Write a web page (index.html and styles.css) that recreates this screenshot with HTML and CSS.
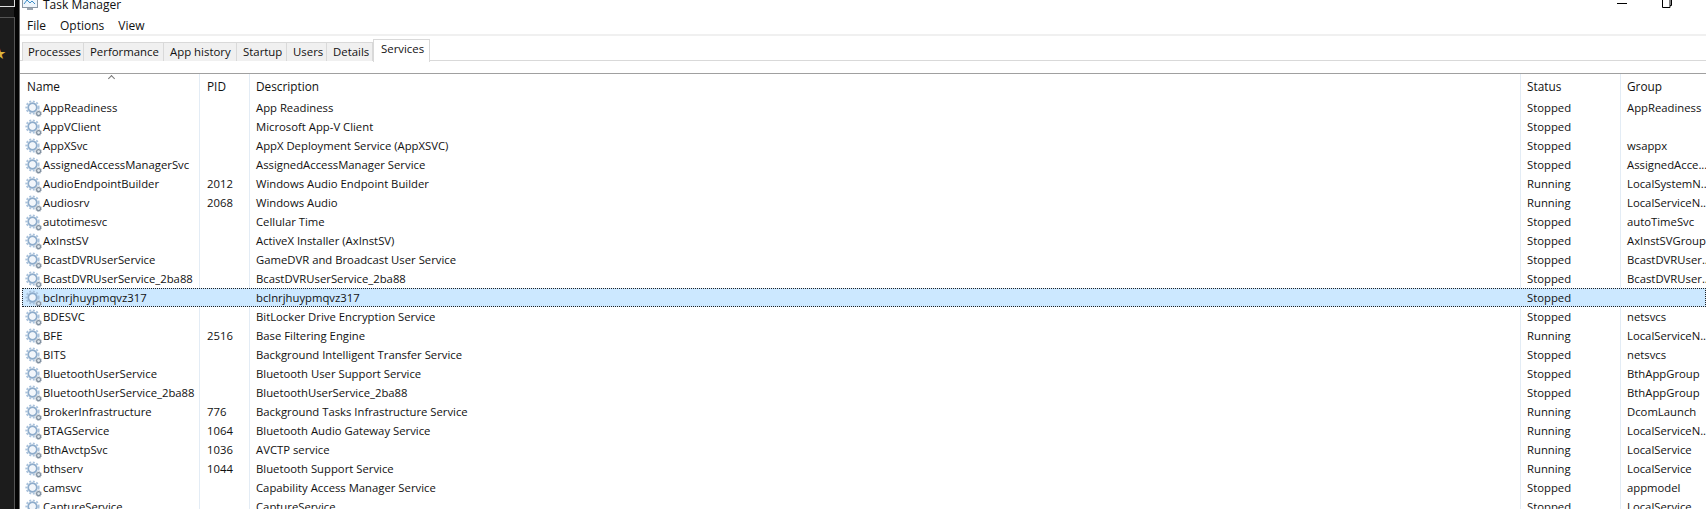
FILE: index.html
```html
<!DOCTYPE html>
<html lang="en">
<head>
<meta charset="utf-8">
<title>Task Manager</title>
<link rel="stylesheet" href="styles.css">
</head>
<body>
<svg width="0" height="0" class="defs"><defs>
<symbol id="gear" viewBox="0 0 17 17">
<circle cx="7.5" cy="7.5" r="6.2" fill="none" stroke="#a9c2dc" stroke-width="1.8" stroke-dasharray="2 1.6"/>
<circle cx="7.5" cy="7.5" r="4.2" fill="none" stroke="#8eaccb" stroke-width="2"/>
<circle cx="7.5" cy="7.5" r="3" fill="#f2f6fb"/>
<circle cx="13.6" cy="13.6" r="3.2" fill="#fff"/>
<circle cx="13.6" cy="13.6" r="2" fill="#dfe6ec" stroke="#7f8f9f" stroke-width="1.2"/>
<circle cx="13.6" cy="13.6" r="3" fill="none" stroke="#98a6b4" stroke-width="0.9" stroke-dasharray="1.2 1.1"/>
</symbol>
</defs></svg>
<div class="desktop">
<aside class="strip">
<div class="strip-top"></div>
<div class="strip-box"><span class="star">★</span></div>
</aside>
<main class="window">
<header class="titlebar">
<svg class="appicon" width="16" height="16" viewBox="0 0 16 16"><rect x="0.5" y="0.5" width="15" height="11" fill="#eef5fb" stroke="#8b97a3"/><path d="M2 8l3-4 3 3 2-2 3 3" fill="none" stroke="#3d8fc9" stroke-width="1"/><rect x="5" y="12" width="6" height="2" fill="#9aa5b0"/></svg>
<span class="title">Task Manager</span>
<svg class="minbtn" width="10" height="4" viewBox="0 0 10 4"><path d="M0 3.500h10" stroke="#000" fill="none"/></svg>
<svg class="maxbtn" width="10" height="8" viewBox="0 0 10 8"><path d="M0.500 0v7.500h7.500v-7.500M8 5.500h1.500v-5.500" stroke="#000" fill="none"/></svg>
</header>
<nav class="menubar"><span>File</span><span>Options</span><span>View</span></nav>
<div class="tabs">
<span class="tab">Processes</span><span class="tab">Performance</span><span class="tab">App history</span><span class="tab">Startup</span><span class="tab">Users</span><span class="tab">Details</span><span class="tab active">Services</span>
</div>
<div class="tabgap"></div>
<section class="table">
<div class="row head"><span class="c name">Name</span><span class="c pid">PID</span><span class="c desc">Description</span><span class="c status">Status</span><span class="c group">Group</span><span class="caret"></span></div>
<div class="body" id="rows"></div>
</section>
</main>
</div>
<script src="rows.js"></script>
</body>
</html>
```
FILE: rows.js
```js
var data = [
["AppReadiness","","App Readiness","Stopped","AppReadiness"],
["AppVClient","","Microsoft App-V Client","Stopped",""],
["AppXSvc","","AppX Deployment Service (AppXSVC)","Stopped","wsappx"],
["AssignedAccessManagerSvc","","AssignedAccessManager Service","Stopped","AssignedAcce..."],
["AudioEndpointBuilder","2012","Windows Audio Endpoint Builder","Running","LocalSystemN..."],
["Audiosrv","2068","Windows Audio","Running","LocalServiceN..."],
["autotimesvc","","Cellular Time","Stopped","autoTimeSvc"],
["AxInstSV","","ActiveX Installer (AxInstSV)","Stopped","AxInstSVGroup"],
["BcastDVRUserService","","GameDVR and Broadcast User Service","Stopped","BcastDVRUser..."],
["BcastDVRUserService_2ba88","","BcastDVRUserService_2ba88","Stopped","BcastDVRUser..."],
["bclnrjhuypmqvz317","","bclnrjhuypmqvz317","Stopped",""],
["BDESVC","","BitLocker Drive Encryption Service","Stopped","netsvcs"],
["BFE","2516","Base Filtering Engine","Running","LocalServiceN..."],
["BITS","","Background Intelligent Transfer Service","Stopped","netsvcs"],
["BluetoothUserService","","Bluetooth User Support Service","Stopped","BthAppGroup"],
["BluetoothUserService_2ba88","","BluetoothUserService_2ba88","Stopped","BthAppGroup"],
["BrokerInfrastructure","776","Background Tasks Infrastructure Service","Running","DcomLaunch"],
["BTAGService","1064","Bluetooth Audio Gateway Service","Running","LocalServiceN..."],
["BthAvctpSvc","1036","AVCTP service","Running","LocalService"],
["bthserv","1044","Bluetooth Support Service","Running","LocalService"],
["camsvc","","Capability Access Manager Service","Stopped","appmodel"],
["CaptureService","","CaptureService","Stopped","LocalService"]
];
var host = document.getElementById("rows");
data.forEach(function (d, i) {
  var r = document.createElement("div");
  r.className = "row" + (i === 10 ? " selected" : "");
  var cls = ["name", "pid", "desc", "status", "group"];
  cls.forEach(function (c, j) {
    var s = document.createElement("span");
    s.className = "c " + c;
    if (j === 0) {
      s.innerHTML = '<svg class="gear" width="17" height="17"><use href="#gear"/></svg>';
      s.appendChild(document.createTextNode(d[0]));
    } else {
      s.textContent = d[j];
    }
    r.appendChild(s);
  });
  host.appendChild(r);
});
```
FILE: styles.css
```css
* { box-sizing: border-box; }
html, body { margin: 0; padding: 0; height: 509px; overflow: hidden; background: #fff; }
body { font-family: "Open Sans", "Noto Sans", sans-serif; font-size: 11.3px; color: #111; }
.defs { position: absolute; }
.desktop { display: flex; height: 509px; overflow: hidden; }
.strip { width: 20px; flex: none; background: #1c1c1c; border-right: 1px solid #6a6a6a; box-shadow: inset -5px 0 0 #050505; }
.strip-top { height: 7px; width: 15px; border: 1px solid #e0e0e0; border-top: 0; border-left: 0; }
.strip-box { height: 502px; margin-top: 10px; width: 15px; border: 1px solid #555; border-left: 0; border-bottom: 0; overflow: hidden; }
.star { display: block; color: #dcb63c; font-size: 16px; line-height: 16px; margin: 27px 0 0 -8px; }
.window { flex: 1; min-width: 0; background: #fff; }
.titlebar { height: 15px; display: flex; align-items: flex-start; padding: 0 34px 0 2px; overflow: hidden; }
.appicon { margin-top: -4px; margin-right: 5px; flex: none; }
.title { line-height: 10px; white-space: nowrap; font-size: 12px; }
.minbtn { margin-left: auto; flex: none; }
.maxbtn { margin-left: 35px; flex: none; }
.menubar { height: 19px; padding: 3px 0 0 7px; display: flex; gap: 14px; line-height: 16px; font-size: 12px; }
.tabs { height: 27px; border-top: 2px solid #f0f0f0; border-bottom: 1px solid #d9d9d9; padding: 3px 0 0 2px; display: grid; grid-template-columns: 62px 80px 73px 50px 40px 46px 57px; justify-content: start; align-items: end; font-size: 11.4px; }
.tab { height: 19px; padding-left: 6px; background: #f0f0f0; border: 1px solid #d9d9d9; border-width: 1px 1px 0 0; line-height: 18px; white-space: nowrap; overflow: hidden; }
.tab:first-child { border-left-width: 1px; padding-left: 5px; }
.tab.active { height: 23px; margin-bottom: -1px; background: #fff; line-height: 17px; padding-left: 7px; border-left-width: 1px; position: relative; }
.tabgap { height: 12px; }
.table { border-top: 1px solid #a0a0a0; }
.row { display: flex; height: 19px; line-height: 19px; }
.row.head { height: 24px; line-height: 24px; position: relative; font-size: 11.8px; }
.c { display: block; flex: none; white-space: nowrap; overflow: hidden; border-right: 1px solid #e3ecf5; padding-left: 6px; }
.name { width: 180px; }
.pid { width: 50px; padding-left: 7px; }
.desc { width: 1271px; }
.status { width: 100px; }
.group { width: 85px; border-right: 0; }
.row:not(.head) .name { padding-left: 5px; }
.row.head .name { padding-left: 7px; }
.gear { vertical-align: -5px; margin-right: 1px; }
.caret { position: absolute; left: 89px; top: 2px; width: 5px; height: 5px; border-left: 1px solid #777; border-top: 1px solid #777; transform: rotate(45deg); }
.selected { background: #cce8ff; outline: 1px dotted #222; outline-offset: -1px; margin-left: 2px; }
.selected .c { border-right-color: transparent; }
.row.selected .name { width: 178px; padding-left: 3px; }
```
